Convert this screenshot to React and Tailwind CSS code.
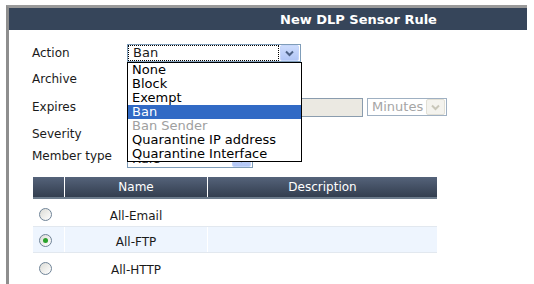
import React from 'react';

const font = { fontFamily: '"DejaVu Sans", Verdana, sans-serif' };

const Chevron = ({ color = '#4d6185' }) => (
  <svg width="9" height="7" viewBox="0 0 9 7">
    <path d="M1 1.5 L4.5 5 L8 1.5" fill="none" stroke={color} strokeWidth="2" />
  </svg>
);

const ArrowButton = ({ disabled }) => (
  <div
    className={
      'flex items-center justify-center w-[19px] h-[16px] border rounded-[2px] ' +
      (disabled
        ? 'bg-[#f4f3ee] border-[#e2e0d6]'
        : 'bg-gradient-to-b from-[#cddcfd] to-[#b2c6f6] border-[#c6d6fb]')
    }
  >
    <Chevron color={disabled ? '#c9c7ba' : '#4d6185'} />
  </div>
);

const options = ['None', 'Block', 'Exempt', 'Ban', 'Ban Sender', 'Quarantine IP address', 'Quarantine Interface'];

const Radio = ({ checked }) => (
  <div className="w-[13px] h-[13px] rounded-full border border-[#6f8397] bg-gradient-to-br from-[#dcdcd6] to-white flex items-center justify-center">
    {checked && <div className="w-[5px] h-[5px] rounded-full bg-[#2aa22a]" />}
  </div>
);

const rows = ['All-Email', 'All-FTP', 'All-HTTP'];

export default function App() {
  return (
    <div className="w-[534px] h-[284px] bg-white overflow-hidden text-[#1a1a1a]" style={font}>
      <div className="ml-[6px] mt-[5px] w-[521px] h-[279px] border-t-[3px] border-l-[3px] border-t-[#9a9a9a] border-l-[#8e8e8e]">
        <div className="h-[22px] bg-[#36455a] flex items-center pl-[271px]">
          <span className="text-white font-bold text-[13px] leading-none">New DLP Sensor Rule</span>
        </div>

        <div className="pl-[23px] pt-[14px] text-[12px]">
          <div className="flex items-center h-[18px]">
            <div className="w-[95px]">Action</div>
            <div className="relative">
              <div className="flex items-center w-[174px] h-[18px] border border-[#7f9db9] bg-white">
                <div className="flex-1 h-[16px] border border-dotted border-black flex items-center pl-[4px] text-[13px]">Ban</div>
                <div className="px-[1px]"><ArrowButton /></div>
              </div>
              <div className="absolute left-0 top-[18px] z-10 w-[175px] border border-black bg-white text-[13px] leading-[14px]">
                {options.map((o) => (
                  <div
                    key={o}
                    className={
                      'h-[14px] pl-[4px] whitespace-nowrap ' +
                      (o === 'Ban' ? 'bg-[#316ac5] text-white' : o === 'Ban Sender' ? 'text-[#a0a0a0]' : 'text-black')
                    }
                  >
                    {o}
                  </div>
                ))}
              </div>
            </div>
          </div>

          <div className="flex items-center h-[34px]">
            <div className="w-[95px]">Archive</div>
          </div>

          <div className="flex items-center h-[22px]">
            <div className="w-[95px]">Expires</div>
            <div className="w-[236px] h-[19px] border border-[#8a9cae] bg-[#ebe9e2]" />
            <div className="ml-[4px] flex items-center w-[80px] h-[18px] border border-[#9fb0c2] bg-white">
              <div className="flex-1 pl-[4px] text-[13px] text-[#a5a5a5]">Minutes</div>
              <div className="px-[1px]"><ArrowButton disabled /></div>
            </div>
          </div>

          <div className="flex items-center h-[32px]">
            <div className="w-[95px]">Severity</div>
          </div>

          <div className="flex items-center h-[18px]">
            <div className="w-[95px] -mt-[6px]">Member type</div>
            <div className="flex items-center w-[126px] h-[18px] border border-[#7f9db9] bg-white">
              <div className="flex-1 pl-[4px] text-[13px]">Rule</div>
              <div className="px-[1px]"><ArrowButton /></div>
            </div>
          </div>
        </div>

        <div className="ml-[24px] mt-[9px] w-[404px] text-[12px]">
          <div className="flex h-[22px] bg-gradient-to-b from-[#55637a] to-[#333e4f] border-b-2 border-b-[#6d7c8c] text-white">
            <div className="w-[32px] border-r border-white" />
            <div className="w-[143px] border-r border-white flex items-center justify-center">Name</div>
            <div className="flex-1 flex items-center justify-center">Description</div>
          </div>
          {rows.map((r, i) => (
            <div
              key={r}
              className={
                'flex h-[27px] ' +
                (i === 1 ? 'bg-[#eef5fe] border-y border-[#e2e8ef]' : 'bg-white')
              }
            >
              <div className={'w-[32px] border-r border-white flex items-center pl-[6px] ' + (i === 1 ? 'pt-[2px]' : 'pt-[4px]')}>
                <Radio checked={i === 1} />
              </div>
              <div className={'w-[143px] border-r border-white flex items-center justify-center ' + (i === 1 ? 'pt-[5px]' : 'pt-[7px]')}>
                {r}
              </div>
              <div className="flex-1" />
            </div>
          ))}
        </div>
      </div>
    </div>
  );
}
